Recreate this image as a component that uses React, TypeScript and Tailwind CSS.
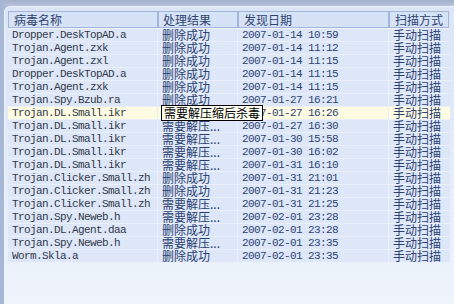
import React from "react";

const rows: [string, string, string][] = [
  ["Dropper.DeskTopAD.a", "删除成功", "2007-01-14 10:59"],
  ["Trojan.Agent.zxk", "删除成功", "2007-01-14 11:12"],
  ["Trojan.Agent.zxl", "删除成功", "2007-01-14 11:15"],
  ["Dropper.DeskTopAD.a", "删除成功", "2007-01-14 11:15"],
  ["Trojan.Agent.zxk", "删除成功", "2007-01-14 11:15"],
  ["Trojan.Spy.Bzub.ra", "删除成功", "2007-01-27 16:21"],
  ["Trojan.DL.Small.ikr", "需要解压...", "2007-01-27 16:26"],
  ["Trojan.DL.Small.ikr", "需要解压...", "2007-01-27 16:30"],
  ["Trojan.DL.Small.ikr", "需要解压...", "2007-01-30 15:58"],
  ["Trojan.DL.Small.ikr", "需要解压...", "2007-01-30 16:02"],
  ["Trojan.DL.Small.ikr", "需要解压...", "2007-01-31 16:10"],
  ["Trojan.Clicker.Small.zh", "删除成功", "2007-01-31 21:01"],
  ["Trojan.Clicker.Small.zh", "删除成功", "2007-01-31 21:23"],
  ["Trojan.Clicker.Small.zh", "需要解压...", "2007-01-31 21:25"],
  ["Trojan.Spy.Neweb.h", "需要解压...", "2007-02-01 23:28"],
  ["Trojan.DL.Agent.daa", "删除成功", "2007-02-01 23:28"],
  ["Trojan.Spy.Neweb.h", "需要解压...", "2007-02-01 23:35"],
  ["Worm.Skla.a", "删除成功", "2007-02-01 23:35"],
];

const cjk = "font-['SimSun','Noto_Sans_CJK_SC',sans-serif]";
const mono = "font-['Liberation_Mono','Noto_Sans_CJK_SC',monospace]";

export default function App() {
  return (
    <div className="relative w-[454px] h-[304px] overflow-hidden bg-[#a7b7d6] flex flex-col">
      <div className="h-[6px] bg-gradient-to-b from-[#a3b0ca] to-[#b6c2da] ml-[4px]" />
      <div className="flex-1 ml-[4px] rounded-tl-[6px] border-t border-l border-[#eef3fb] bg-gradient-to-b from-[#dbe5f6] via-[#e4ecf9] to-[#eff4fb] pl-[3px] pt-[4px] flex flex-col">
        {/* header */}
        <div className={`flex h-[17px] ${cjk} text-[12px] leading-[15px] text-[#2f4470]`}>
          <div className="w-[150px] border border-[#a3b6da] bg-[#d6e2f6] pl-[5px]">病毒名称</div>
          <div className="w-[80px] border border-[#a3b6da] bg-[#d6e2f6] pl-[4px]">处理结果</div>
          <div className="w-[151px] border border-[#a3b6da] bg-[#d6e2f6] pl-[5px]">发现日期</div>
          <div className="w-[60px] border border-[#a3b6da] bg-[#d6e2f6] pl-[5px]">扫描方式</div>
        </div>
        {/* body */}
        <div className="w-[442px] border-t border-[#eef3fc]">
          {rows.map(([name, res, date], i) => (
            <div
              key={i}
              className={`flex h-[13px] leading-[12px] border-b border-[#e9f0fb] ${
                i === 6 ? "bg-[#fdfbe2]" : "bg-[#dde7f8]"
              }`}
            >
              <div className={`w-[150px] shrink-0 pl-[4px] ${mono} text-[11px] tracking-[-0.6px] text-[#323848] border-r border-[#e9f0fb] whitespace-nowrap`}>
                {name}
              </div>
              <div className={`w-[80px] shrink-0 pl-[4px] ${cjk} text-[12px] text-[#2b4171] border-r border-[#e9f0fb] whitespace-nowrap`}>
                {res}
              </div>
              <div className={`w-[151px] shrink-0 pl-[4px] ${mono} text-[11px] tracking-[-0.6px] text-[#2e4473] border-r border-[#e9f0fb] whitespace-nowrap`}>
                {date}
              </div>
              <div className={`w-[60px] shrink-0 pl-[4px] ${cjk} text-[12px] text-[#2b4171] whitespace-nowrap`}>
                手动扫描
              </div>
            </div>
          ))}
        </div>
      </div>
      {/* tooltip */}
      <div className={`absolute left-[161px] top-[105px] h-[16px] w-[102px] border border-black bg-[#fffff4] ${cjk} text-[12px] leading-[14px] text-black pl-[2px] whitespace-nowrap`}>
        需要解压缩后杀毒
      </div>
    </div>
  );
}
